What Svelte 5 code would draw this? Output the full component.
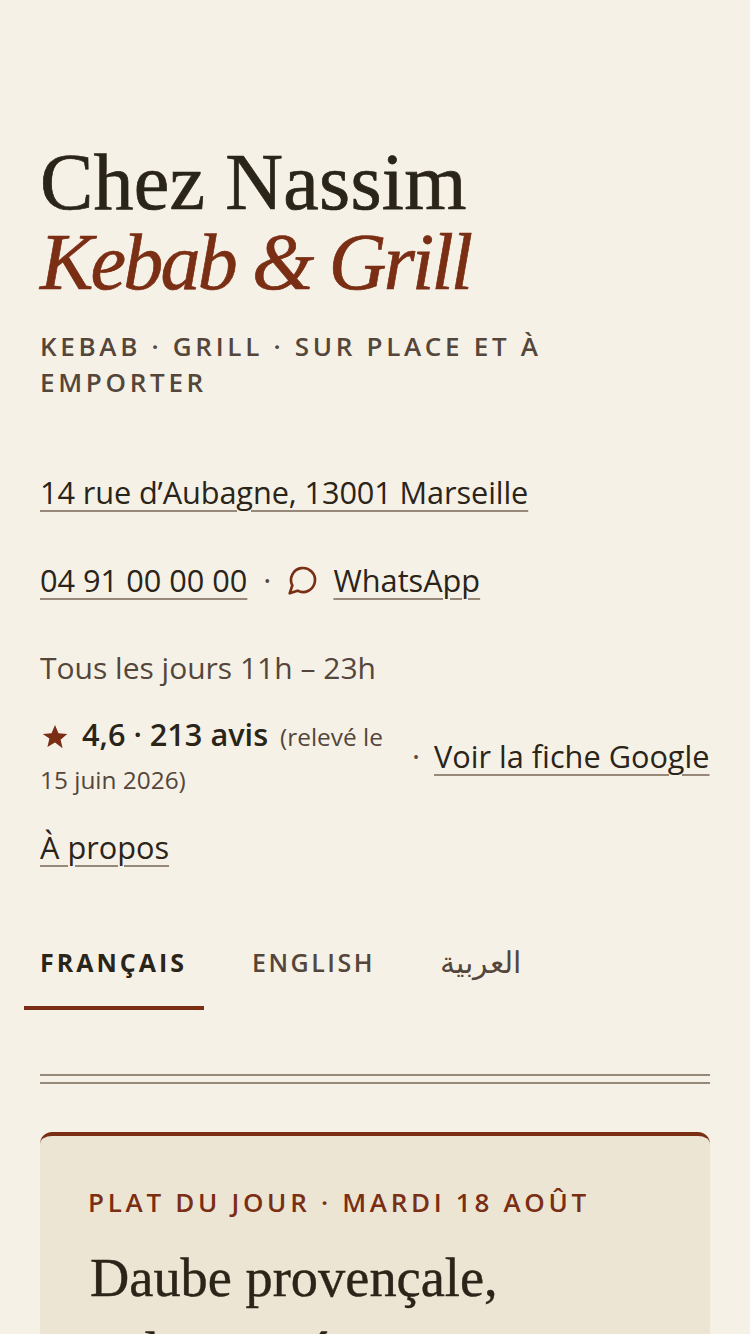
<script>
  const langs = [
    { label: 'Français', active: true },
    { label: 'English', active: false },
    { label: 'العربية', active: false, ar: true }
  ];
</script>

<main class="page">
  <header class="head">
    <h1>Chez Nassim <em>Kebab &amp; Grill</em></h1>
    <p class="tagline">Kebab · Grill · Sur place et à emporter</p>
  </header>

  <div class="infos">
    <p class="row address"><a href="#top">14 rue d’Aubagne, 13001 Marseille</a></p>
    <p class="row">
      <a href="#top">04 91 00 00 00</a>
      <span class="sep">·</span>
      <svg class="chat" viewBox="0 0 24 24" width="32" height="32" fill="none" stroke="#7a2e14" stroke-width="2" stroke-linecap="round" stroke-linejoin="round" aria-hidden="true">
        <path d="M7.900 20A9 9 0 1 0 4 16.100L2 22Z" />
      </svg>
      <a href="#top">WhatsApp</a>
    </p>
    <p class="row hours">Tous les jours 11h – 23h</p>
    <div class="rating">
      <p class="score">
        <svg class="star" viewBox="0 0 24 24" width="28" height="28" aria-hidden="true">
          <path fill="#7a2e14" d="M12 1.800l3 6.900 7.500.7-5.700 4.900 1.700 7.300L12 16.800l-6.500 3.800 1.700-7.300L1.500 9.400l7.500-.7z" />
        </svg>
        <strong>4,6 · 213 avis</strong>
        <small>(relevé le 15 juin 2026)</small>
      </p>
      <span class="sep">·</span>
      <a href="#top">Voir la fiche Google</a>
    </div>
    <p class="row about"><a href="#top">À propos</a></p>
  </div>

  <nav class="tabs">
    {#each langs as lang}
      <button class:active={lang.active} class:ar={lang.ar}>{lang.label}</button>
    {/each}
  </nav>

  <div class="rule"></div>

  <section class="card">
    <p class="kicker">Plat du jour · Mardi 18 août</p>
    <h2>Daube provençale, polenta crémeuse</h2>
  </section>
</main>

<style>
  :global(body) {
    background: #f6f1e7;
    overflow: hidden;
  }
  .page {
    height: 1334px;
    overflow: hidden;
    padding: 142px 40px 0;
    box-sizing: border-box;
    color: #2a2419;
    font-family: "Open Sans", "Noto Sans", sans-serif;
  }
  h1 {
    margin: 0;
    font-family: "Liberation Serif", serif;
    font-weight: 400;
    font-size: 80px;
    line-height: 80px;
    letter-spacing: 0.2px;
    -webkit-text-stroke: 0.7px currentColor;
    color: #2a2419;
  }
  h1 em {
    display: block;
    letter-spacing: -2.8px;
    color: #7a2e14;
  }
  .tagline {
    margin: 26px 0 0;
    font-size: 26px;
    line-height: 36px;
    font-weight: 600;
    letter-spacing: 3.7px;
    text-transform: uppercase;
    color: #54463a;
  }
  .infos {
    margin-top: 70px;
    font-size: 30.7px;
  }
  .row {
    margin: 0 0 44px;
    line-height: 44px;
    display: flex;
    align-items: center;
    gap: 16px;
  }
  .address a {
    letter-spacing: -0.1px;
  }
  a {
    color: #2a2419;
    text-decoration: underline;
    text-decoration-color: #97897a;
    text-decoration-thickness: 2px;
    text-underline-offset: 6px;
  }
  .sep {
    color: #54463a;
  }
  .chat {
    margin-right: -2px;
  }
  .hours {
    color: #54463a;
    font-size: 30px;
    margin-bottom: 24px;
  }
  .rating {
    display: flex;
    align-items: center;
    gap: 14px;
  }
  .rating a,
  .rating .sep {
    margin-bottom: 2px;
  }
  .score {
    margin: 0;
    width: 358px;
    flex: none;
    line-height: 40px;
  }
  .star {
    vertical-align: -5px;
    margin: 0 5px 0 1px;
  }
  .score strong {
    font-weight: 600;
  }
  .score small {
    font-size: 24.4px;
    color: #54463a;
    margin-left: 4px;
  }
  .about {
    margin: 25px 0 0;
  }
  .tabs {
    display: flex;
    margin: 47px 0 0 -16px;
  }
  .tabs button {
    background: none;
    border: 0;
    border-bottom: 4px solid transparent;
    padding: 26px 16px 24px;
    margin-right: 32px;
    font: 600 25px/40px "Open Sans", "Noto Sans", sans-serif;
    letter-spacing: 2.500px;
    text-transform: uppercase;
    color: #54463a;
  }
  .tabs button.active {
    color: #2a2419;
    font-weight: 700;
    letter-spacing: 3px;
    padding-right: 17px;
    border-bottom-color: #7a2e14;
  }
  .tabs button.ar {
    font-size: 30px;
    letter-spacing: 0;
    font-weight: 500;
    margin-left: 1px;
  }
  .rule {
    margin-top: 64px;
    height: 6px;
    border-top: 2px solid #97897a;
    border-bottom: 2px solid #97897a;
  }
  .card {
    margin-top: 48px;
    padding: 48px;
    background: #ede5d3;
    border-top: 4px solid #7a2e14;
    border-radius: 12px;
  }
  .kicker {
    margin: 0;
    font-size: 26px;
    line-height: 36px;
    font-weight: 600;
    letter-spacing: 3.7px;
    text-transform: uppercase;
    color: #7a2e14;
  }
  h2 {
    margin: 21px 0 0 2px;
    font-family: "Liberation Serif", serif;
    font-weight: 400;
    font-size: 54.4px;
    line-height: 74px;
    -webkit-text-stroke: 0.4px currentColor;
  }
</style>
